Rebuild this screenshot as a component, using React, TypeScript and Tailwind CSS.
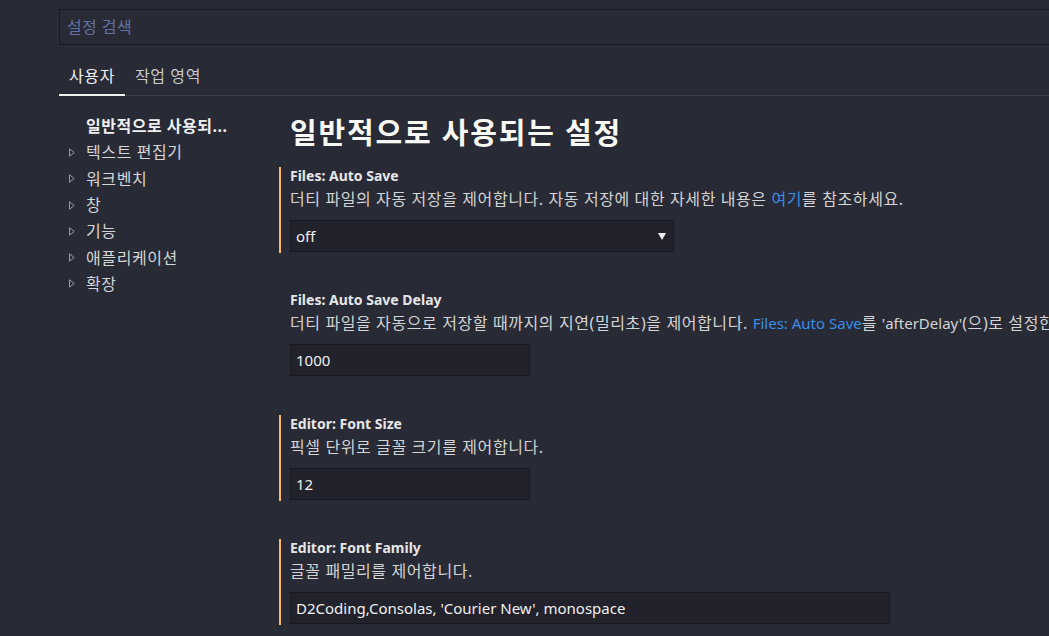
import React from "react";

const FONT = `"Noto Sans", "Noto Sans CJK KR", sans-serif`;

const tree = ["텍스트 편집기", "워크벤치", "창", "기능", "애플리케이션", "확장"];

function Caret() {
  return (
    <svg width="6" height="9" viewBox="0 0 6 9" className="shrink-0">
      <polygon points="0.5,0.8 5.2,4.5 0.5,8.2" fill="none" stroke="#9a9ca6" strokeWidth="1" />
    </svg>
  );
}

function Setting({
  title,
  marked,
  children,
  value,
  width,
  select,
}: {
  title: string;
  marked?: boolean;
  children: React.ReactNode;
  value: string;
  width: string;
  select?: boolean;
}) {
  return (
    <div
      className={`flex flex-col pl-[9px] pb-[1px] ${
        marked ? "border-l-2 border-[#ffb86c]" : "border-l-2 border-transparent"
      }`}
    >
      <div className="h-[17px] leading-[17px] text-[14px] font-bold text-[#e6e6e6] whitespace-nowrap">
        {title}
      </div>
      <div className="mt-[5px] h-[20px] leading-[20px] text-[16px] tracking-[0.6px] text-[#d4d4d4] whitespace-nowrap">
        {children}
      </div>
      <div
        className={`mt-[11px] h-[32px] ${width} flex items-center justify-between pl-[5px] pr-[7px] bg-[#21222c] border border-[#191a21] text-[15px] text-[#f0f0f0]`}
      >
        <span>{value}</span>
        {select && (
          <svg width="8" height="7" viewBox="0 0 8 7">
            <polygon points="0,0 8,0 4,7" fill="#f0f0f0" />
          </svg>
        )}
      </div>
    </div>
  );
}

function Link({ children }: { children: React.ReactNode }) {
  return <span className="text-[#3a8ee6]">{children}</span>;
}

export default function App() {
  return (
    <div
      className="w-[1049px] h-[636px] overflow-hidden bg-[#282a36] pl-[59px] pt-[9px]"
      style={{ fontFamily: FONT }}
    >
      <div className="w-[1100px] h-[36px] border border-[#191a21] flex items-center pl-[7px] text-[16px] tracking-[0.4px] text-[#6272a4]">
        설정 검색
      </div>

      <div className="mt-[12px] h-[39px] flex border-b border-[#3c3e4a]">
        <div className="pl-[10px] pr-[10px] flex items-center border-b-2 border-[#f0f0f0] -mb-px text-[16px] tracking-[0.6px] text-[#f0f0f0]">
          사용자
        </div>
        <div className="px-[10px] flex items-center text-[16px] tracking-[0.6px] text-[#c8c8c8]">
          작업 영역
        </div>
      </div>

      <div className="flex">
        <div className="w-[220px] shrink-0 pt-[17px] flex flex-col">
          <div className="h-[26.3px] flex items-center pl-[27px] text-[16px] tracking-[0.5px] font-bold text-[#f0f0f0] whitespace-nowrap">
            일반적으로 사용되...
          </div>
          {tree.map((t) => (
            <div
              key={t}
              className="h-[26.3px] flex items-center pl-[10px] gap-[11px] text-[16px] tracking-[0.6px] text-[#d6d6d6]"
            >
              <Caret />
              <span>{t}</span>
            </div>
          ))}
        </div>

        <div className="flex flex-col pt-[17px]">
          <h1 className="h-[40px] flex items-center pl-[11px] text-[29px] tracking-[1.8px] font-bold text-[#f8f8f2] whitespace-nowrap">
            일반적으로 사용되는 설정
          </h1>
          <div className="mt-[14px] flex flex-col gap-[38px]">
            <Setting title="Files: Auto Save" marked value="off" width="w-[384px]" select>
              더티 파일의 자동 저장을 제어합니다. 자동 저장에 대한 자세한 내용은 <Link>여기</Link>를
              참조하세요.
            </Setting>
            <Setting title="Files: Auto Save Delay" value="1000" width="w-[240px]">
              더티 파일을 자동으로 저장할 때까지의 지연(밀리초)을 제어합니다.{" "}
              <span className="text-[15px] tracking-normal">
                <Link>Files: Auto Save</Link>
              </span>
              를 <span className="text-[15px] tracking-normal">'afterDelay'</span>(으)로 설정한
            </Setting>
            <Setting title="Editor: Font Size" marked value="12" width="w-[240px]">
              픽셀 단위로 글꼴 크기를 제어합니다.
            </Setting>
            <Setting
              title="Editor: Font Family"
              marked
              value="D2Coding,Consolas, 'Courier New', monospace"
              width="w-[600px]"
            >
              글꼴 패밀리를 제어합니다.
            </Setting>
          </div>
        </div>
      </div>
    </div>
  );
}
